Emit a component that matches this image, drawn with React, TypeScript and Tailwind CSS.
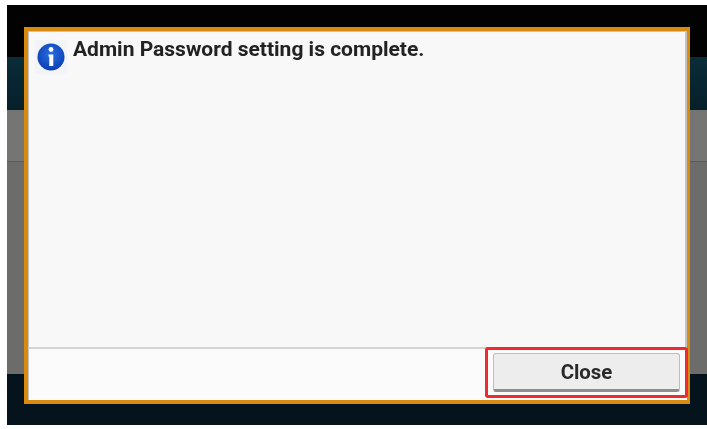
export default function App() {
  return (
    <div className="w-[707px] h-[429px] bg-white pt-[5px] pl-[7px] font-['Roboto','Liberation_Sans',sans-serif] blur-[0.5px]">
      <div className="relative w-[700px] h-[420px] flex flex-col">
        {/* printer panel behind the dialog */}
        <div className="h-[52px] bg-[#020203]" />
        <div className="h-[53px] bg-gradient-to-b from-[#0a2c38] to-[#06202b]" />
        <div className="h-[52px] bg-[#757573] border-b border-[#5a5a58]" />
        <div className="h-[212px] bg-[#6c6c6a]" />
        <div className="flex-1 bg-[#04131c]" />

        <div className="absolute left-[17px] top-[22px] w-[666px] h-[377px] flex flex-col border-t-4 border-b-4 border-l-4 border-r-[3px] border-[#d98a10] bg-[#f8f8f8]">
          <div className="flex-1 flex items-start border-l border-t border-r-2 border-[#c4c4c4]">
            <div className="ml-[6px] mt-[8px] w-[32px] h-[34px] rounded-[3px] bg-[#f2f4f7] flex items-center justify-center shrink-0">
              <svg viewBox="0 0 28 28" className="w-[28px] h-[28px]">
                <defs>
                  <radialGradient id="infoFill" cx="50%" cy="40%" r="60%">
                    <stop offset="0%" stopColor="#2a6fe0" />
                    <stop offset="100%" stopColor="#0a3fb5" />
                  </radialGradient>
                </defs>
                <circle cx="14" cy="14" r="13.5" fill="url(#infoFill)" />
                <circle cx="14" cy="6.5" r="2.4" fill="#fff" />
                <path d="M11.5 11.5h4.8v11.5h-4v-9.5h-0.8z" fill="#fff" />
              </svg>
            </div>
            <p className="ml-[6px] mt-[4px] text-[21px] leading-[26px] font-bold text-[#222]">
              Admin Password setting is complete.
            </p>
          </div>
          <div className="h-[53px] shrink-0 flex justify-end items-start bg-[#fbfbfb] border-t-2 border-[#d4d4d4] border-l border-l-[#c4c4c4]">
            <button className="mt-[-2px] mr-[-1px] w-[203px] h-[51px] border-[3px] border-[#ee2a30] rounded-[3px] flex items-center justify-center">
              <span className="w-[187px] h-[39px] pt-[1px] flex items-center justify-center rounded-[3px] bg-[#ededed] border border-[#bdbdbd] border-b-[3px] border-b-[#8e8e8e] text-[20.4px] font-bold text-[#2a2a2a]">
                Close
              </span>
            </button>
          </div>
        </div>
      </div>
    </div>
  );
}
